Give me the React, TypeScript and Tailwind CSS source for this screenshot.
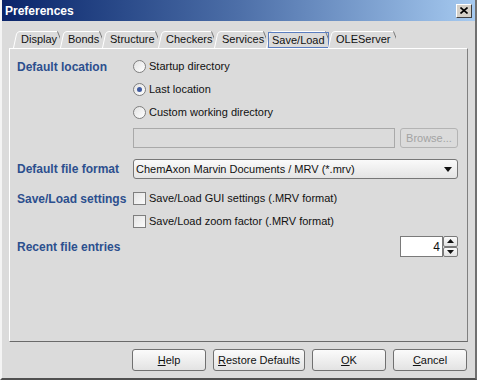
import { type ReactNode } from "react";

const TABS = [
  { label: "Display", w: 47 },
  { label: "Bonds", w: 42 },
  { label: "Structure", w: 56 },
  { label: "Checkers", w: 56 },
  { label: "Services", w: 52 },
  { label: "Save/Load", w: 62, active: true },
  { label: "OLEServer", w: 68 },
];

export default function App() {
  return (
    <div
      className="flex h-[380px] w-[477px] flex-col border-b-2 border-l-2 border-r-2 border-b-[#505050] border-l-[#f4f4f4] border-r-[#707070] bg-[#dbdbdb] text-[11px] text-[#111]"
      style={{ fontFamily: '"Liberation Sans", Arial, sans-serif' }}
    >
      <TitleBar />

      <div className="flex flex-1 flex-col px-[7px] pt-[10px]">
        <div className="flex h-[17px] items-end pl-[4px]">
          {TABS.map((tab) => (
            <Tab key={tab.label} label={tab.label} width={tab.w} active={tab.active} />
          ))}
        </div>

        <section className="flex h-[294px] flex-col border-b border-l border-r border-t border-b-[#6a6a6a] border-l-white border-r-[#808080] border-t-white pl-[7px] pr-[9px] pt-[6px]">
          <div className="flex">
            <Label className="h-[23px]">Default location</Label>
            <div className="flex flex-1 flex-col">
              <Radio label="Startup directory" />
              <Radio label="Last location" checked />
              <Radio label="Custom working directory" />
              <div className="mt-[4px] flex h-[20px] gap-[5px]">
                <div className="flex-1 border border-[#a9a9a9] bg-[#dbdbdb]" />
                <div className="flex w-[58px] items-center justify-center rounded-[3px] border border-[#b4b4b4] text-[#a3a3a3]">
                  Browse...
                </div>
              </div>
            </div>
          </div>

          <div className="mt-[11px] flex items-center">
            <Label className="h-[20px]">Default file format</Label>
            <div className="flex h-[20px] flex-1 items-center justify-between rounded-[3px] border border-[#777] bg-gradient-to-b from-[#fafafa] to-[#e4e4e4] pl-[2px] pr-[5px]">
              <span>ChemAxon Marvin Documents / MRV (*.mrv)</span>
              <svg width="8" height="5" viewBox="0 0 8 5">
                <path d="M0 0 H8 L4 5 Z" fill="#111" />
              </svg>
            </div>
          </div>

          <div className="mt-[8px] flex">
            <Label className="h-[23px]">Save/Load settings</Label>
            <div className="flex flex-1 flex-col">
              <Check label="Save/Load GUI settings (.MRV format)" />
              <Check label="Save/Load zoom factor (.MRV format)" />
            </div>
          </div>

          <div className="mt-[3px] flex items-center justify-between">
            <Label className="h-[20px]">Recent file entries</Label>
            <div className="flex h-[21px] w-[58px]">
              <div className="flex flex-1 items-center justify-end border border-[#7a7a7a] bg-white pr-[2px] text-[12px]">
                4
              </div>
              <div className="flex w-[15px] flex-col">
                <SpinButton up />
                <SpinButton />
              </div>
            </div>
          </div>
        </section>

        <div className="mt-[7px] flex justify-end gap-[7px] pr-[1px]">
          <Button width="w-[74px]">
            <span className="underline">H</span>elp
          </Button>
          <Button width="w-[92px]">
            <span className="underline">R</span>estore Defaults
          </Button>
          <Button width="w-[74px]">
            <span className="underline">O</span>K
          </Button>
          <Button width="w-[74px]">
            <span className="underline">C</span>ancel
          </Button>
        </div>
      </div>
    </div>
  );
}

function TitleBar() {
  return (
    <div className="flex h-[21px] items-center justify-between bg-gradient-to-r from-[#0a246a] via-[#4d6fa8] to-[#a6caf0] pl-[3px] pr-[3px]">
      <span className="text-[12px] font-bold text-white">Preferences</span>
      <div className="flex h-[14px] w-[16px] items-center justify-center border-b border-l border-r border-t border-b-[#404040] border-l-white border-r-[#404040] border-t-white bg-[#d4d0c8]">
        <svg width="8" height="7" viewBox="0 0 8 7">
          <path d="M0.5 0.5 L7.5 6.5 M7.5 0.5 L0.5 6.5" stroke="#000" strokeWidth="1.6" />
        </svg>
      </div>
    </div>
  );
}

function Tab({ label, width, active }: { label: string; width: number; active?: boolean }) {
  return (
    <div className={`relative flex h-[17px] items-center ${active ? "pl-[2px]" : "pl-[5px]"}`} style={{ width }}>
      <svg className="absolute inset-0" width={width} height="17" viewBox={`0 0 ${width} 17`}>
        <path d={`M0.5 17 L3.5 3 Q4.5 0.5 7 0.5 H${width - 3}`} fill="none" stroke="#fff" />
        <path d={`M${width - 2.5} 0.5 L${width + 0.5} 8`} fill="none" stroke="#7a7a7a" />
      </svg>
      <span
        className={
          active
            ? "relative border border-[#5b7ec0] px-[3px] leading-[14px]"
            : "relative px-[3px] leading-[13px]"
        }
      >
        {label}
      </span>
    </div>
  );
}

function Label({ children, className }: { children: ReactNode; className: string }) {
  return (
    <div className={`flex w-[116px] shrink-0 items-center text-[12px] font-bold text-[#2c4f8e] ${className}`}>
      {children}
    </div>
  );
}

function Radio({ label, checked }: { label: string; checked?: boolean }) {
  return (
    <div className="flex h-[23px] items-center gap-[3px]">
      <span className="flex h-[13px] w-[13px] items-center justify-center rounded-full border border-[#7e7e7e] bg-gradient-to-br from-[#e2e2e2] to-white">
        {checked && <span className="h-[5px] w-[5px] rounded-full bg-[#3f5aa0]" />}
      </span>
      <span>{label}</span>
    </div>
  );
}

function Check({ label }: { label: string }) {
  return (
    <div className="flex h-[23px] items-center gap-[3px]">
      <span className="h-[13px] w-[13px] border border-[#7e7e7e] bg-gradient-to-br from-[#e4e4e4] to-[#fafafa]" />
      <span>{label}</span>
    </div>
  );
}

function SpinButton({ up }: { up?: boolean }) {
  return (
    <div className="flex flex-1 items-center justify-center rounded-[2px] border border-[#7a7a7a] bg-gradient-to-b from-[#fafafa] to-[#e2e2e2]">
      <svg width="7" height="4" viewBox="0 0 7 4">
        <path d={up ? "M0 4 H7 L3.5 0 Z" : "M0 0 H7 L3.5 4 Z"} fill="#111" />
      </svg>
    </div>
  );
}

function Button({ children, width }: { children: ReactNode; width: string }) {
  return (
    <button
      className={`flex h-[22px] ${width} items-center justify-center rounded-[3px] border border-[#707070] bg-gradient-to-b from-[#fbfbfb] to-[#e3e3e3] text-[11px]`}
    >
      <span>{children}</span>
    </button>
  );
}
